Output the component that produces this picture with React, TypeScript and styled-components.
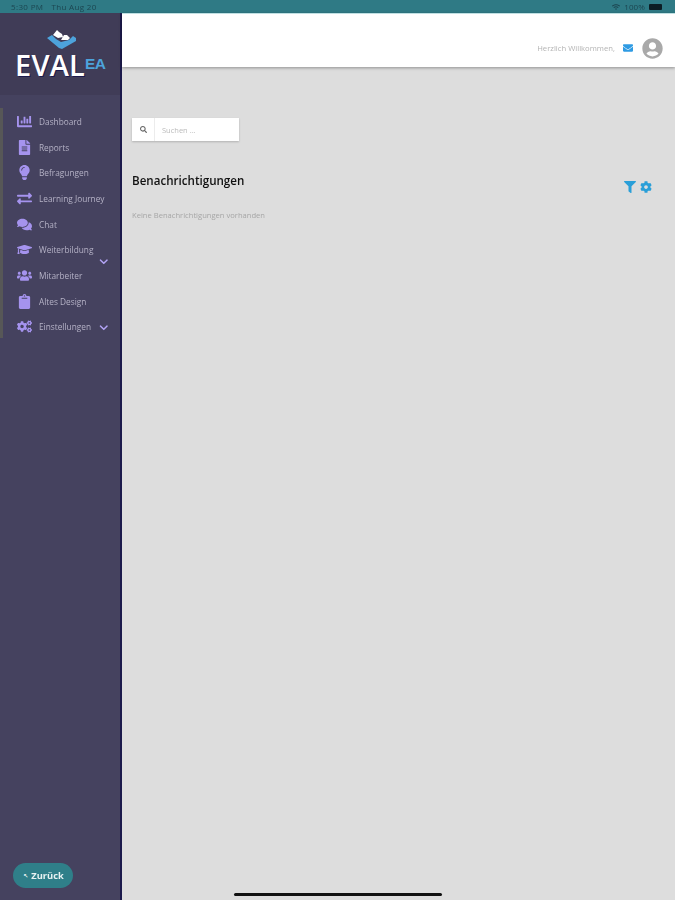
import styled, { createGlobalStyle } from "styled-components";
import {
  FaChartBar,
  FaChevronDown,
  FaClipboard,
  FaCog,
  FaCogs,
  FaComments,
  FaEnvelope,
  FaExchangeAlt,
  FaFileAlt,
  FaFilter,
  FaGraduationCap,
  FaLightbulb,
  FaSearch,
  FaUserCircle,
  FaUsers,
  FaWifi,
} from "react-icons/fa";

const GlobalStyle = createGlobalStyle`
  html, body {
    margin: 0;
    padding: 0;
    background: #dddddd;
  }
  * {
    box-sizing: border-box;
  }
`;

const Page = styled.div`
  position: relative;
  width: 675px;
  height: 900px;
  overflow: hidden;
  display: flex;
  flex-direction: column;
  font-family: "Open Sans", "Liberation Sans", sans-serif;
`;

const StatusBar = styled.div`
  height: 13px;
  flex: none;
  background: #2f7a85;
  color: #1c4651;
  font-size: 8px;
  line-height: 13px;
  padding: 0 13px 0 11px;
  display: flex;
  justify-content: space-between;
  align-items: center;
`;

const StatusTime = styled.div`
  display: flex;
  gap: 8px;
  letter-spacing: 0.35px;
  filter: blur(0.4px);
`;

const StatusRight = styled.div`
  display: flex;
  align-items: center;
  gap: 4px;
`;

const StatusText = styled.span`
  filter: blur(0.4px);
  letter-spacing: 0.1px;
`;

const Battery = styled.div`
  width: 13px;
  height: 6px;
  background: #0c1d24;
  border-radius: 1px;
`;

const Body = styled.div`
  flex: 1;
  display: flex;
  min-height: 0;
`;

const Sidebar = styled.aside`
  width: 122px;
  flex: none;
  background: #45425f;
  border-right: 2px solid #1c1a4c;
  display: flex;
  flex-direction: column;
`;

const LogoBlock = styled.div`
  height: 82px;
  flex: none;
  background: #403c57;
  display: flex;
  flex-direction: column;
  align-items: flex-start;
  padding: 16px 0 0 15px;
`;

const MarkSlot = styled.div`
  display: flex;
  margin-left: 32px;
`;

const LogoWord = styled.div`
  display: flex;
  align-items: flex-start;
  margin-top: -1px;
  height: 34px;
`;

const LogoEval = styled.span`
  color: #fff;
  font-family: "Open Sans", sans-serif;
  font-weight: 600;
  font-size: 29px;
  line-height: 34px;
  letter-spacing: 0.2px;
  text-shadow: 1px 1px 0 #1c1a4c;
`;

const LogoEa = styled.span`
  color: #4da3dc;
  font-family: "Liberation Sans", sans-serif;
  font-weight: 700;
  font-size: 15.5px;
  line-height: 20px;
  letter-spacing: -0.5px;
  margin-left: 0;
  margin-top: 6px;
`;

const Nav = styled.nav`
  margin-top: 13px;
  padding-top: 0.5px;
  height: 230px;
  flex: none;
  border-left: 3px solid #575757;
  display: flex;
  flex-direction: column;
`;

const NavItem = styled.div`
  position: relative;
  height: 25.7px;
  flex: none;
  display: flex;
  align-items: center;
  padding-left: 13px;
  color: #b5b2c6;
  font-size: 8.3px;
`;

const NavIcon = styled.span`
  width: 17px;
  flex: none;
  display: flex;
  justify-content: center;
  color: #a593ee;
  font-size: 15px;
  margin-right: 6px;
`;

const NavLabel = styled.span`
  filter: blur(0.35px);
  white-space: nowrap;
`;

const Chevron = styled.span<{ $drop?: boolean }>`
  position: absolute;
  right: 12px;
  top: ${(p) => (p.$drop ? "20px" : "9px")};
  display: flex;
  color: #b3a4f5;
  font-size: 9.5px;
`;

const SidebarFoot = styled.div`
  margin-top: auto;
  padding: 0 0 12px 13px;
`;

const BackButton = styled.div`
  width: 60px;
  height: 25px;
  border-radius: 13px;
  background: #2f7f89;
  color: #e8f2f2;
  font-size: 9.3px;
  font-weight: 700;
  display: flex;
  align-items: center;
  justify-content: center;
  gap: 3px;
  padding-left: 1px;
`;

const BackArrow = styled.span`
  font-size: 6px;
  font-family: "DejaVu Sans", sans-serif;
`;

const BackLabel = styled.span`
  filter: blur(0.25px);
`;

const Main = styled.main`
  flex: 1;
  min-width: 0;
  display: flex;
  flex-direction: column;
  background: #dddddd;
`;

const TopBar = styled.header`
  height: 54px;
  flex: none;
  background: #fff;
  border-top: 1px solid #bfe0e2;
  box-shadow: 0 1px 3px rgba(0, 0, 0, 0.35);
  display: flex;
  align-items: center;
  justify-content: flex-end;
  padding: 15px 12px 0 0;
`;

const Welcome = styled.span`
  color: #b4b4b4;
  font-size: 7.7px;
  margin-right: 8px;
  filter: blur(0.35px);
`;

const MailIcon = styled.span`
  display: flex;
  color: #2f9be3;
  font-size: 10px;
  margin-right: 9px;
`;

const Avatar = styled.span`
  display: flex;
  color: #a9a9a9;
  font-size: 21px;
`;

const Content = styled.section`
  flex: 1;
  padding: 51px 22px 0 10px;
`;

const SearchBox = styled.div`
  width: 107px;
  height: 23px;
  display: flex;
  box-shadow: 0 1px 2px rgba(0, 0, 0, 0.2);
`;

const SearchIcon = styled.div`
  width: 23px;
  background: #fff;
  color: #666;
  font-size: 7px;
  display: flex;
  align-items: center;
  justify-content: center;
  border-right: 1px solid #ececec;
`;

const SearchInput = styled.div`
  flex: 1;
  background: #fff;
  color: #bbb;
  font-size: 7.5px;
  display: flex;
  align-items: center;
  padding-left: 7px;
  filter: blur(0.25px);
`;

const TitleRow = styled.div`
  margin-top: 32px;
  display: flex;
  justify-content: space-between;
  align-items: flex-start;
`;

const Title = styled.h2`
  margin: 0;
  color: #111;
  font-size: 11.6px;
  line-height: 16px;
  font-weight: 600;
  filter: blur(0.25px);
`;

const TitleTools = styled.div`
  display: flex;
  align-items: center;
  gap: 4px;
  margin-top: 8px;
  margin-right: 1px;
  color: #2a9fd8;
  font-size: 12px;
`;

const EmptyNote = styled.p`
  margin: 17px 0 0;
  color: #a6a6a6;
  font-size: 7.6px;
  line-height: 11px;
  filter: blur(0.3px);
`;

const HomeIndicator = styled.div`
  position: absolute;
  left: 234px;
  bottom: 4px;
  width: 208px;
  height: 3px;
  border-radius: 2px;
  background: #111;
`;

const navItems = [
  { label: "Dashboard", icon: <FaChartBar /> },
  { label: "Reports", icon: <FaFileAlt /> },
  { label: "Befragungen", icon: <FaLightbulb /> },
  { label: "Learning Journey", icon: <FaExchangeAlt /> },
  { label: "Chat", icon: <FaComments /> },
  { label: "Weiterbildung", icon: <FaGraduationCap />, chevron: "drop" },
  { label: "Mitarbeiter", icon: <FaUsers /> },
  { label: "Altes Design", icon: <FaClipboard /> },
  { label: "Einstellungen", icon: <FaCogs />, chevron: "inline" },
];

const LogoMark = () => (
  <svg width="30" height="20" viewBox="0 0 30 20">
    <path d="M0 9 L5 6 L9 10 L14 13 L22 11 L26 7 L29 9 L29 12 L15 20 L12 19 Z" fill="#4da3dc" />
    <path d="M6 6 L10 1 L12 3 L15 5 L16 8 L11 9 Z M14 11 L17 6 L20 6 L23 9 L21 11 Z" fill="#fff" />
  </svg>
);

export default function App() {
  return (
    <Page>
      <GlobalStyle />
      <StatusBar>
        <StatusTime>
          <span>5:30 PM</span>
          <span>Thu Aug 20</span>
        </StatusTime>
        <StatusRight>
          <FaWifi size={8} />
          <StatusText>100%</StatusText>
          <Battery />
        </StatusRight>
      </StatusBar>
      <Body>
        <Sidebar>
          <LogoBlock>
            <MarkSlot>
              <LogoMark />
            </MarkSlot>
            <LogoWord>
              <LogoEval>EVAL</LogoEval>
              <LogoEa>EA</LogoEa>
            </LogoWord>
          </LogoBlock>
          <Nav>
            {navItems.map((item) => (
              <NavItem key={item.label}>
                <NavIcon>{item.icon}</NavIcon>
                <NavLabel>{item.label}</NavLabel>
                {item.chevron && (
                  <Chevron $drop={item.chevron === "drop"}>
                    <FaChevronDown />
                  </Chevron>
                )}
              </NavItem>
            ))}
          </Nav>
          <SidebarFoot>
            <BackButton>
              <BackArrow>↖</BackArrow>
              <BackLabel>Zurück</BackLabel>
            </BackButton>
          </SidebarFoot>
        </Sidebar>
        <Main>
          <TopBar>
            <Welcome>Herzlich Willkommen,</Welcome>
            <MailIcon>
              <FaEnvelope />
            </MailIcon>
            <Avatar>
              <FaUserCircle />
            </Avatar>
          </TopBar>
          <Content>
            <SearchBox>
              <SearchIcon>
                <FaSearch />
              </SearchIcon>
              <SearchInput>Suchen ...</SearchInput>
            </SearchBox>
            <TitleRow>
              <Title>Benachrichtigungen</Title>
              <TitleTools>
                <FaFilter />
                <FaCog />
              </TitleTools>
            </TitleRow>
            <EmptyNote>Keine Benachrichtigungen vorhanden</EmptyNote>
          </Content>
        </Main>
      </Body>
      <HomeIndicator />
    </Page>
  );
}
